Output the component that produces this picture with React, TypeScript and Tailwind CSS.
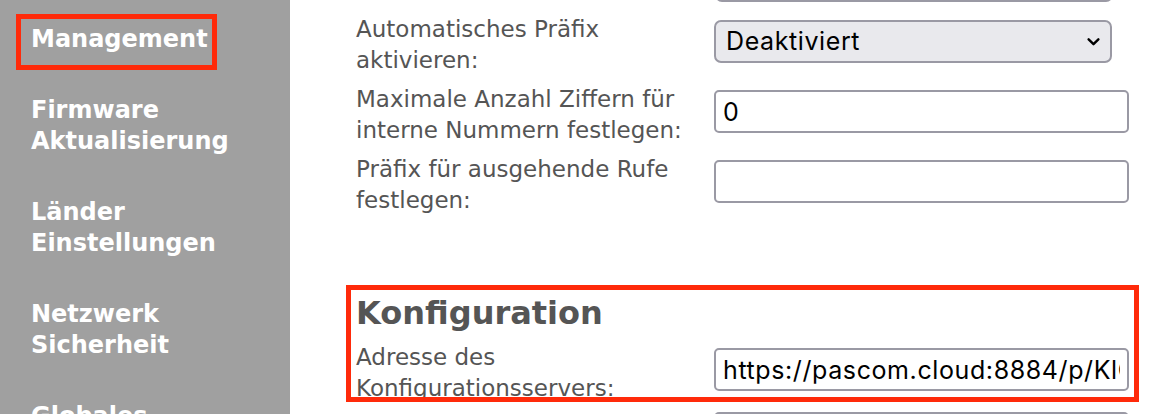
const sideItems = [
  ['Management'],
  ['Firmware', 'Aktualisierung'],
  ['Länder', 'Einstellungen'],
  ['Netzwerk', 'Sicherheit'],
  ['Globales', 'Telefonbuch'],
]

const Chevron = () => (
  <svg
    className="pointer-events-none absolute right-[12px] top-1/2 h-[10px] w-[13px] -translate-y-1/2 text-black"
    viewBox="0 0 12 8"
    fill="none"
    stroke="currentColor"
    strokeWidth="2.2"
    strokeLinecap="round"
    strokeLinejoin="round"
  >
    <path d="M1.5 1.5 6 6l4.5-4.5" />
  </svg>
)

const Select = ({ value }: { value: string }) => (
  <div className="relative w-[398px]">
    <select
      defaultValue={value}
      className="h-[43px] w-full appearance-none rounded-[7px] border-2 border-[#9a99a4] bg-[#e9e9ed] pl-[10px] font-['Inter',sans-serif] text-[25px] tracking-[0.6px] text-black outline-none"
    >
      <option>{value}</option>
      <option>Aktiviert</option>
    </select>
    <Chevron />
  </div>
)

const TextInput = ({ value = '' }: { value?: string }) => (
  <input
    type="text"
    defaultValue={value}
    className="h-[43px] w-[415px] rounded-[5px] border-2 border-[#9a99a4] bg-white px-[7px] font-['Inter',sans-serif] text-[25px] tracking-[0.6px] text-black outline-none"
  />
)

const Row = ({ label, children }: { label: string; children: React.ReactNode }) => (
  <div className="mb-[8px] flex items-start">
    <label className="min-h-[62px] w-[350px] shrink-0 pr-2">{label}</label>
    <div className="ml-[8px] mt-[6px]">{children}</div>
  </div>
)

export default function App() {
  return (
    <div className="flex h-[414px] w-[1156px] overflow-hidden bg-white font-['DejaVu_Sans',Verdana,sans-serif]">
      {/* Sidebar */}
      <nav className="w-[290px] shrink-0 bg-[#a0a0a0] pl-[31px] pt-[24px] text-[24px] font-bold leading-[31px] text-white">
        <ul className="flex flex-col gap-[40px]">
          {sideItems.map((lines, i) => (
            <li key={i} className="relative">
              {lines.map((l) => (
                <div key={l}>{l}</div>
              ))}
              {i === 0 && (
                <span className="absolute -left-[15px] -top-[10px] h-[56px] w-[201px] border-[5px] border-[#ff2a0a]" />
              )}
            </li>
          ))}
        </ul>
      </nav>

      {/* Content */}
      <main className="flex-1 pl-[66px] text-[23px] leading-[31px] text-[#555555]">
        <div className="-mt-[41px]">
          {/* previous row, scrolled mostly out of view */}
          <div className="mb-[12px] flex">
            <div className="w-[359px] shrink-0" />
            <Select value="Deaktiviert" />
          </div>
          <Row label="Automatisches Präfix aktivieren:">
            <Select value="Deaktiviert" />
          </Row>
          <Row label="Maximale Anzahl Ziffern für interne Nummern festlegen:">
            <TextInput value="0" />
          </Row>
          <Row label="Präfix für ausgehende Rufe festlegen:">
            <TextInput />
          </Row>

          {/* Konfiguration */}
          <section className="relative mt-[77px]">
            <h2 className="mb-[9px] text-[32px] font-bold leading-[40px] text-[#555555]">Konfiguration</h2>
            <Row label="Adresse des Konfigurationsservers:">
              <TextInput value="https://pascom.cloud:8884/p/KlOqW7xZ/provisioning" />
            </Row>
            <span className="pointer-events-none absolute -left-[10px] -top-[8px] h-[117px] w-[793px] border-[5px] border-[#ff2a0a]" />
          </section>
          <div className="flex">
            <div className="w-[358px] shrink-0" />
            <TextInput />
          </div>
        </div>
      </main>
    </div>
  )
}
